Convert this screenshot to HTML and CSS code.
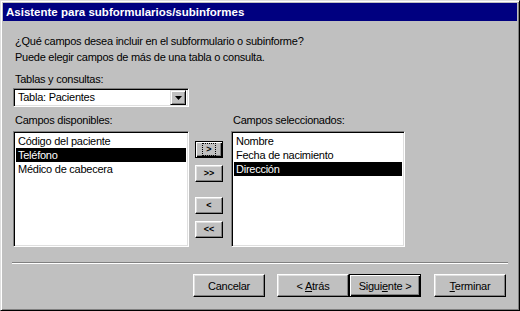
FILE: index.html
```html
<!DOCTYPE html>
<html lang="es">
  <head>
    <meta charset="UTF-8" />
    <meta name="viewport" content="width=device-width, initial-scale=1.0" />
    <title>Asistente para subformularios/subinformes</title>
    <link rel="stylesheet" href="styles.css">
  </head>
  <body>
    <div class="window">
      <div class="titlebar">Asistente para subformularios/subinformes</div>

      <div class="content">
        <p class="intro first">¿Qué campos desea incluir en el subformulario o subinforme?</p>
        <p class="intro">Puede elegir campos de más de una tabla o consulta.</p>

        <label class="caption tables-caption">Tablas y consultas:</label>
        <div class="combo">
          <span class="combo-value">Tabla: Pacientes</span>
          <span class="combo-btn">
            <svg width="7" height="4" viewBox="0 0 7 4"><path d="M0 0h7L3.5 4z" fill="#000" /></svg>
          </span>
        </div>

        <div class="lists">
          <div class="list-col left-col">
            <div class="caption">Campos disponibles:</div>
            <ul class="listbox">
              <li>Código del paciente</li>
              <li class="selected">Teléfono</li>
              <li>Médico de cabecera</li>
            </ul>
          </div>

          <div class="movers">
            <button class="move default"><span class="focus">&gt;</span></button>
            <button class="move">&gt;&gt;</button>
            <button class="move gap">&lt;</button>
            <button class="move">&lt;&lt;</button>
          </div>

          <div class="list-col right-col">
            <div class="caption">Campos seleccionados:</div>
            <ul class="listbox">
              <li>Nombre</li>
              <li>Fecha de nacimiento</li>
              <li class="selected">Dirección</li>
            </ul>
          </div>
        </div>

        <div class="separator"></div>

        <div class="footer">
          <button class="btn">Cancelar</button>
          <button class="btn back">&lt; <u>A</u>trás</button>
          <button class="btn default">Sigui<u>e</u>nte &gt;</button>
          <button class="btn finish"><u>T</u>erminar</button>
        </div>
      </div>
    </div>
  </body>
</html>
```

FILE: styles.css
```css
body {
  margin: 0;
  font-family: "Liberation Sans", Arial, sans-serif;
  font-size: 11px;
  letter-spacing: -0.25px;
  color: #000;
  background: #c0c0c0;
}
.window {
  width: 520px;
  height: 311px;
  box-sizing: border-box;
  padding: 2px;
  background: #c0c0c0;
  border-top: 1px solid #dfdfdf;
  border-left: 1px solid #dfdfdf;
  border-right: 1px solid #000;
  border-bottom: 1px solid #000;
  box-shadow: inset 1px 1px #fff, inset -1px -1px #808080;
}
.titlebar {
  height: 18px;
  line-height: 18px;
  padding-left: 3px;
  background: #000080;
  color: #fff;
  font-weight: bold;
  font-size: 11.5px;
  letter-spacing: 0;
}
.content {
  padding: 0 9px 0 10px;
}
.intro {
  margin: 3px 0 0;
  padding-left: 2px;
  line-height: 13px;
}
.intro.first {
  margin-top: 14px;
}
.caption {
  display: block;
  padding-left: 2px;
  line-height: 13px;
}
.tables-caption {
  margin-top: 9px;
}
.combo {
  margin-top: 2px;
  width: 176px;
  height: 19px;
  box-sizing: border-box;
  display: flex;
  align-items: center;
  justify-content: space-between;
  background: #fff;
  border-top: 1px solid #808080;
  border-left: 1px solid #808080;
  border-right: 1px solid #fff;
  border-bottom: 1px solid #fff;
  box-shadow: inset 1px 1px #000, inset -1px -1px #dfdfdf;
  padding: 2px;
}
.combo-value {
  padding-left: 2px;
  line-height: 13px;
}
.combo-btn {
  width: 16px;
  height: 15px;
  box-sizing: border-box;
  display: flex;
  align-items: center;
  justify-content: center;
  background: #c0c0c0;
  border-top: 1px solid #dfdfdf;
  border-left: 1px solid #dfdfdf;
  border-right: 1px solid #000;
  border-bottom: 1px solid #000;
  box-shadow: inset 1px 1px #fff, inset -1px -1px #808080;
}
.lists {
  display: flex;
  margin-top: 7px;
}
.list-col .caption {
  margin-bottom: 4px;
}
.listbox {
  list-style: none;
  margin: 0;
  padding: 2px;
  height: 116px;
  box-sizing: border-box;
  background: #fff;
  border-top: 1px solid #808080;
  border-left: 1px solid #808080;
  border-right: 1px solid #fff;
  border-bottom: 1px solid #fff;
  box-shadow: inset 1px 1px #000, inset -1px -1px #dfdfdf;
}
.left-col .listbox {
  width: 176px;
}
.right-col .listbox {
  width: 174px;
}
.listbox li {
  height: 14px;
  line-height: 14px;
  padding-left: 2px;
  white-space: nowrap;
}
.listbox li.selected {
  background: #000;
  color: #fff;
}
.movers {
  display: flex;
  flex-direction: column;
  margin: 27px 8px 0 6px;
}
button {
  font-family: "Liberation Sans", Arial, sans-serif;
  letter-spacing: -0.25px;
  color: #000;
  background: #c0c0c0;
  border-top: 1px solid #fff;
  border-left: 1px solid #fff;
  border-right: 1px solid #000;
  border-bottom: 1px solid #000;
  box-shadow: inset -1px -1px #808080, inset 1px 1px #dfdfdf;
  padding: 0;
  cursor: pointer;
}
button.default {
  border: 1px solid #000;
  box-shadow: inset 1px 1px #fff, inset -1px -1px #000, inset -2px -2px #808080;
}
.move {
  width: 28px;
  height: 17px;
  font-size: 9px;
  font-weight: bold;
  line-height: 11px;
  letter-spacing: 0;
  margin-bottom: 7px;
}
.move.gap {
  margin-top: 8px;
}
.focus {
  display: inline-block;
  padding: 0 3px;
  outline: 1px dotted #000;
}
.separator {
  margin: 15px 0 0 -1px;
  border-top: 1px solid #808080;
  border-bottom: 1px solid #fff;
  height: 0;
}
.footer {
  display: flex;
  justify-content: flex-end;
  margin-top: 10px;
  padding-right: 2px;
}
.btn {
  width: 72px;
  height: 23px;
  font-size: 11px;
}
.btn.back {
  margin-left: 12px;
}
.btn.finish {
  margin-left: 13px;
}
```
